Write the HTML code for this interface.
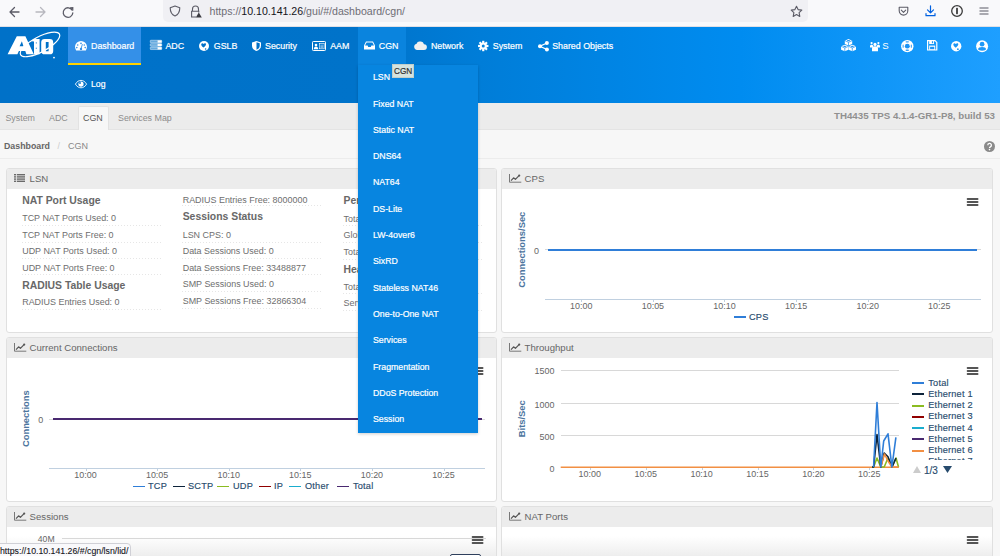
<!DOCTYPE html>
<html><head><meta charset="utf-8">
<style>
*{margin:0;padding:0;box-sizing:border-box}
html,body{width:1000px;height:556px;overflow:hidden;background:#f7f7f7;font-family:"Liberation Sans",sans-serif;position:relative}
.a{position:absolute}
.t{position:absolute;white-space:nowrap;line-height:1}
.pn{position:absolute;background:#fff;border:1px solid #e0e0e0;border-radius:3px;overflow:hidden}
.ph{position:absolute;left:0;top:0;right:0;height:20px;background:#ececec}
svg{overflow:visible}
</style></head><body>
<div class="a" style="left:0px;top:0px;width:1000px;height:26px;background:#f9f9fb"></div><div class="a" style="left:0px;top:26px;width:1000px;height:1px;background:#e0e0e6"></div><div class="a" style="left:163px;top:-6px;width:645px;height:28px;background:#f0f0f4;border-radius:5px"></div><svg class="a" style="left:8px;top:6px;" width="12" height="12" viewBox="0 0 12 12"><path d="M11 6H2M6.5 1.5L2 6l4.5 4.5" fill="none" stroke="#5b5b66" stroke-width="1.3" stroke-linecap="round" stroke-linejoin="round"/></svg><svg class="a" style="left:35px;top:6px;" width="12" height="12" viewBox="0 0 12 12"><path d="M1 6h9M5.5 1.5L10 6l-4.5 4.5" fill="none" stroke="#b8b8bf" stroke-width="1.3" stroke-linecap="round" stroke-linejoin="round"/></svg><svg class="a" style="left:62px;top:6px;" width="12" height="12" viewBox="0 0 12 12"><path d="M10.2 4.2A4.8 4.8 0 1 0 10.8 7" fill="none" stroke="#5b5b66" stroke-width="1.3" stroke-linecap="round"/><path d="M7.6 1.2L11.4 1v3.8z" fill="#5b5b66"/></svg><svg class="a" style="left:169px;top:5px;" width="12" height="12" viewBox="0 0 12 12"><path d="M6 1L1.2 2.8c0 4.4 1.8 7 4.8 8.2 3-1.2 4.8-3.8 4.8-8.2z" fill="none" stroke="#5b5b66" stroke-width="1.1" stroke-linejoin="round"/></svg><svg class="a" style="left:190px;top:5px;" width="12" height="13" viewBox="0 0 12 13"><path d="M2.5 6V4a3 3 0 0 1 6 0v2" fill="none" stroke="#5b5b66" stroke-width="1.1"/><path d="M6 12H1.6V6.2h7.2v1.3" fill="none" stroke="#5b5b66" stroke-width="1.1"/><path d="M8.8 7.5l3 5H5.8z" fill="#3a3a40"/></svg><div class="t" style="left:209.5px;top:6.2px;font-size:10.6px;color:#6e6d74">https://<span style="color:#15141a">10.10.141.26</span>/gui/#/dashboard/cgn/</div><svg class="a" style="left:790px;top:5px;" width="13" height="13" viewBox="0 0 13 13"><path d="M6.5 1.2l1.6 3.4 3.7.5-2.7 2.6.7 3.7-3.3-1.8-3.3 1.8.7-3.7L1.2 5.1l3.7-.5z" fill="none" stroke="#5b5b66" stroke-width="1.1" stroke-linejoin="round"/></svg><svg class="a" style="left:898px;top:6px;" width="11" height="11" viewBox="0 0 11 11"><path d="M1.2 1.2h8.6v3.6a4.3 4.3 0 0 1-8.6 0z" fill="none" stroke="#5b5b66" stroke-width="1.1" stroke-linejoin="round"/><path d="M3.3 4.2l2.2 2.1 2.2-2.1" fill="none" stroke="#5b5b66" stroke-width="1.1" stroke-linecap="round" stroke-linejoin="round"/></svg><svg class="a" style="left:925px;top:5px;" width="11" height="12" viewBox="0 0 11 12"><path d="M5.5 0.8v7M2.5 4.8l3 3 3-3" fill="none" stroke="#0061e0" stroke-width="1.2" stroke-linecap="round" stroke-linejoin="round"/><path d="M1 8.5v2.2h9V8.5" fill="none" stroke="#0061e0" stroke-width="1.2" stroke-linecap="round" stroke-linejoin="round"/></svg><svg class="a" style="left:951px;top:5px;" width="12" height="12" viewBox="0 0 12 12"><circle cx="6" cy="6" r="5.3" fill="none" stroke="#3b3b3b" stroke-width="1.3"/><rect x="5.1" y="2.8" width="1.8" height="6.4" rx=".6" fill="#3b3b3b"/></svg><svg class="a" style="left:979px;top:7px;" width="10" height="8" viewBox="0 0 10 8"><path d="M0.5 1h9M0.5 4h9M0.5 7h9" stroke="#5b5b66" stroke-width="1.1"/></svg><div class="a" style="left:0px;top:27px;width:1000px;height:76px;background:linear-gradient(90deg,#0071c8 0%,#0073ca 36%,#007dd8 48%,#008cf0 74%,#1e9fff 100%)"></div><div class="a" style="left:68px;top:27px;width:73px;height:36px;background:#3490e8"></div><div class="a" style="left:68px;top:63px;width:73px;height:2px;background:#ffd200"></div><div class="a" style="left:358px;top:27px;width:48px;height:38px;background:#0a84de"></div><svg class="a" style="left:0px;top:28px;" width="64" height="34" viewBox="0 0 64 34"><path d="M7.6 26.3L16.8 8.3h8.6l8.4 18h-7.4l-1.1-3.3h-6.4l-1.5 3.3z M19.6 18.3h3.8l-1.5-5z" fill="#fff" fill-rule="evenodd"/>
<path d="M31.8 13.2l1.4-2.3h6.4v15.4h-5.6V13.4z" fill="#fff"/>
<path d="M44.6 10.9h5.2a3.4 3.4 0 0 1 3.4 3.4v8.6a3.4 3.4 0 0 1-3.4 3.4h-5.2a3.4 3.4 0 0 1-3.4-3.4v-8.6a3.4 3.4 0 0 1 3.4-3.4z M45.8 14v9.2h2.8V14z" fill="#fff" fill-rule="evenodd"/>
<path d="M36.3 14.2v1.4M36.3 19.6v1.4M47.2 14.6v1M47.2 20v1" stroke="#0070c8" stroke-width=".7"/>
<ellipse cx="40" cy="16.4" rx="22" ry="7.6" transform="rotate(-28 40 16.4)" fill="none" stroke="#fff" stroke-width="1.2"/>
<path d="M21 20.5 L30 13" stroke="#0070c8" stroke-width="0"/>
<circle cx="54" cy="29.6" r=".9" fill="#fff"/></svg><svg class="a" style="left:74.7px;top:41.2px;" width="12" height="9.5" viewBox="0 0 12 9.5"><path d="M1.13 9.5A6 6 0 1 1 10.87 9.5z" fill="#fff"/><circle cx="6" cy="2.4" r=".8" fill="#3490e8"/><circle cx="2.7" cy="4" r=".8" fill="#3490e8"/><circle cx="9.3" cy="4" r=".8" fill="#3490e8"/><circle cx="1.8" cy="6.6" r=".8" fill="#3490e8"/><circle cx="10.2" cy="6.6" r=".8" fill="#3490e8"/><path d="M6 7.8L7.4 3.2" stroke="#3490e8" stroke-width=".9"/><circle cx="6" cy="7.9" r="1.2" fill="#3490e8"/></svg><svg class="a" style="left:149.5px;top:40.4px;" width="12" height="9.6" viewBox="0 0 12 9.6"><g fill="rgba(255,255,255,.4)" stroke="rgba(255,255,255,.9)" stroke-width=".5"><rect x=".25" y=".25" width="11.5" height="2.5" rx=".6"/><rect x=".25" y="3.65" width="11.5" height="2.5" rx=".6"/><rect x=".25" y="7.05" width="11.5" height="2.5" rx=".6"/></g><g fill="#fff"><rect x="7.6" y=".4" width="4" height="2.2"/><rect x="7.6" y="3.8" width="4" height="2.2"/><rect x="7.6" y="7.2" width="4" height="2.2"/></g></svg><svg class="a" style="left:199.4px;top:40.6px;" width="10" height="10" viewBox="0 0 10 10"><circle cx="5" cy="5" r="5" fill="#fff"/><path d="M2.3 2.9c.5-.9 1.7-.8 2.3.1.6-.9 1.8-1.1 2.3-.3.5.9-.5 2.3-2.3 3.9C2.8 5.2 1.9 3.8 2.3 2.9z" fill="#0070c8"/><circle cx="6.6" cy="8" r=".8" fill="#0070c8"/></svg><svg class="a" style="left:252.2px;top:40.6px;" width="9" height="10" viewBox="0 0 9 10"><path d="M4.5 0L0 1.4v3.4C0 7.6 2 9.2 4.5 10 7 9.2 9 7.6 9 4.8V1.4z" fill="#fff"/><path d="M4.5 1.2v7.6C6.5 8 7.7 6.8 7.7 4.8V2.2z" fill="#0070c8"/></svg><svg class="a" style="left:312.2px;top:40.8px;" width="14" height="10" viewBox="0 0 14 10"><rect x=".5" y=".5" width="13" height="9" rx=".8" fill="none" stroke="#fff" stroke-width="1"/><circle cx="4" cy="4" r="1.3" fill="#fff"/><path d="M1.8 8.2c0-1.6 1-2.6 2.2-2.6s2.2 1 2.2 2.6z" fill="#fff"/><rect x="7.6" y="2.6" width="4.6" height="5.2" fill="none" stroke="#fff" stroke-width=".6"/><path d="M8.4 4.2h3M8.4 5.4h3M8.4 6.6h3" stroke="#fff" stroke-width=".5"/></svg><svg class="a" style="left:364.4px;top:41.4px;" width="11" height="8.5" viewBox="0 0 11 8.5"><path d="M2 .4h7L11 4.6v3.9H0V4.6z" fill="#fff"/><path d="M2.6 1.5h5.8L10 4.6H7.4l-.6 1.3H4.2l-.6-1.3H1z" fill="#0b83dd"/></svg><svg class="a" style="left:413.8px;top:40.8px;" width="13" height="9" viewBox="0 0 13 9"><path d="M3.2 9A3.2 3.2 0 0 1 2.6 2.7 3 3 0 0 1 5.6 0.6a3.6 3.6 0 0 1 4.4 2.6A2.9 2.9 0 0 1 10 9z" fill="#f0f0f0"/></svg><svg class="a" style="left:478.2px;top:41.2px;" width="10.5" height="10" viewBox="0 0 10.5 10"><g transform="translate(5.25 5.0)" fill="#fff"><rect x="-1.1" y="-5.2" width="2.2" height="2.6" transform="rotate(0)"/><rect x="-1.1" y="-5.2" width="2.2" height="2.6" transform="rotate(45)"/><rect x="-1.1" y="-5.2" width="2.2" height="2.6" transform="rotate(90)"/><rect x="-1.1" y="-5.2" width="2.2" height="2.6" transform="rotate(135)"/><rect x="-1.1" y="-5.2" width="2.2" height="2.6" transform="rotate(180)"/><rect x="-1.1" y="-5.2" width="2.2" height="2.6" transform="rotate(225)"/><rect x="-1.1" y="-5.2" width="2.2" height="2.6" transform="rotate(270)"/><rect x="-1.1" y="-5.2" width="2.2" height="2.6" transform="rotate(315)"/><circle r="3.6"/></g><circle cx="5.25" cy="5" r="1.5" fill="#0884de"/></svg><svg class="a" style="left:537.5px;top:40.5px;" width="11" height="10.5" viewBox="0 0 11 10.5"><circle cx="8.9" cy="2" r="2" fill="#fff"/><circle cx="2" cy="5.25" r="2" fill="#fff"/><circle cx="8.9" cy="8.5" r="2" fill="#fff"/><path d="M8.9 2L2 5.25 8.9 8.5" fill="none" stroke="#fff" stroke-width="1.3"/></svg><div class="t" style="left:91.0px;top:42.1px;font-size:8.85px;color:#fff;font-weight:normal;-webkit-text-stroke:.2px #fff">Dashboard</div><div class="t" style="left:165.4px;top:42.1px;font-size:8.85px;color:#fff;font-weight:normal;-webkit-text-stroke:.2px #fff">ADC</div><div class="t" style="left:213.8px;top:42.1px;font-size:8.85px;color:#fff;font-weight:normal;-webkit-text-stroke:.2px #fff">GSLB</div><div class="t" style="left:265.0px;top:42.1px;font-size:8.85px;color:#fff;font-weight:normal;-webkit-text-stroke:.2px #fff">Security</div><div class="t" style="left:330.2px;top:42.1px;font-size:8.85px;color:#fff;font-weight:normal;-webkit-text-stroke:.2px #fff">AAM</div><div class="t" style="left:378.8px;top:42.1px;font-size:8.85px;color:#fff;font-weight:normal;-webkit-text-stroke:.2px #fff">CGN</div><div class="t" style="left:430.9px;top:42.1px;font-size:8.85px;color:#fff;font-weight:normal;-webkit-text-stroke:.2px #fff">Network</div><div class="t" style="left:492.8px;top:42.1px;font-size:8.85px;color:#fff;font-weight:normal;-webkit-text-stroke:.2px #fff">System</div><div class="t" style="left:552.2px;top:42.1px;font-size:8.85px;color:#fff;font-weight:normal;-webkit-text-stroke:.2px #fff">Shared Objects</div><svg class="a" style="left:74.8px;top:80px;" width="12" height="8.2" viewBox="0 0 12 8.2"><path d="M0.4 4.1C2 1.4 4 .4 6 .4s4 1 5.6 3.7C10 6.8 8 7.8 6 7.8S2 6.8.4 4.1z" fill="none" stroke="#fff" stroke-width=".9"/><circle cx="6" cy="4.1" r="2.6" fill="#fff"/><circle cx="5" cy="3" r=".9" fill="#0070c8"/></svg><div class="t" style="left:91.0px;top:80.2px;font-size:8.7px;color:#fff;font-weight:normal;-webkit-text-stroke:.2px #fff">Log</div><svg class="a" style="left:840.8px;top:39.4px;" width="15.1" height="12.3" viewBox="0 0 15.1 12.3"><path d="M7.5 0L11.2 1.65V4.949999999999999L7.5 6.6L3.8 4.949999999999999V1.65z" fill="#fff"/><path d="M3.8 1.65L7.5 3.3L11.2 1.65M7.5 3.3V6.6" fill="none" stroke="#1b8ff0" stroke-width=".7"/><ellipse cx="7.5" cy="1.65" rx="1.6280000000000001" ry="0.66" fill="#1b8ff0"/><path d="M3.8 5.7L7.5 7.35V10.649999999999999L3.8 12.3L0.09999999999999964 10.649999999999999V7.35z" fill="#fff"/><path d="M0.09999999999999964 7.35L3.8 9.0L7.5 7.35M3.8 9.0V12.3" fill="none" stroke="#1b8ff0" stroke-width=".7"/><ellipse cx="3.8" cy="7.35" rx="1.6280000000000001" ry="0.66" fill="#1b8ff0"/><path d="M11.3 5.7L15.0 7.35V10.649999999999999L11.3 12.3L7.6000000000000005 10.649999999999999V7.35z" fill="#fff"/><path d="M7.6000000000000005 7.35L11.3 9.0L15.0 7.35M11.3 9.0V12.3" fill="none" stroke="#1b8ff0" stroke-width=".7"/><ellipse cx="11.3" cy="7.35" rx="1.6280000000000001" ry="0.66" fill="#1b8ff0"/></svg><svg class="a" style="left:869.9px;top:41.6px;" width="10" height="9.2" viewBox="0 0 10 9.2"><g fill="#fff"><circle cx="5" cy="2.4" r="1.6"/><circle cx="1.6" cy="1.1" r="1.1"/><circle cx="8.4" cy="1.1" r="1.1"/><path d="M2 9.2V6.2c0-1.2 1.2-2 3-2s3 .8 3 2v3z"/><path d="M0 5.6V4.2c0-.8.6-1.4 1.6-1.4s1.6.6 1.6 1.4v1.4z"/><path d="M6.8 5.6V4.2c0-.8.6-1.4 1.6-1.4s1.6.6 1.6 1.4v1.4z"/></g></svg><div class="t" style="left:882.2px;top:41.4px;font-size:9.6px;color:#fff;font-weight:normal;">S</div><svg class="a" style="left:901.3px;top:39.6px;" width="12.6" height="12.4" viewBox="0 0 12.6 12.4"><circle cx="6.3" cy="6.15" r="6.2" fill="#fff"/><circle cx="6.3" cy="6.15" r="2.45" fill="#1a92f4"/><g fill="#1a92f4" opacity=".85"><rect x="4.6" y="1.3" width="3.3" height="1.1" rx=".55"/><rect x="4.6" y="9.5" width="3.3" height="1.4" rx=".6"/><rect x="1.6" y="4.4" width="1.1" height="3.4" rx=".55"/><rect x="9.8" y="4.4" width="1.1" height="3.4" rx=".55"/></g></svg><svg class="a" style="left:927px;top:40.3px;" width="10.4" height="10.6" viewBox="0 0 10.4 10.6"><path d="M.6.6h7.4l1.8 1.8v7.6H.6z" fill="none" stroke="#fff" stroke-width="1.2"/><rect x="2.2" y=".6" width="4.8" height="3.4" fill="#fff"/><rect x="4.9" y="1.2" width="1.2" height="2" fill="#1a94f5"/><rect x="2.2" y="5.6" width="6" height="4.4" fill="#fff"/><rect x="3.1" y="6.8" width="4.2" height="2.4" fill="#1a94f5"/></svg><svg class="a" style="left:950.7px;top:40.6px;" width="10.4" height="10.4" viewBox="0 0 10.4 10.4"><circle cx="5.2" cy="5.2" r="5.2" fill="#fff"/><path d="M2.4 2.9c.5-.9 1.7-.8 2.4.1.6-.9 1.9-1.1 2.4-.3.5.9-.5 2.4-2.4 4C2.9 5.3 2 3.9 2.4 2.9z" fill="#1b96f6"/><circle cx="6.9" cy="8.2" r=".9" fill="#1b96f6"/></svg><svg class="a" style="left:975.9px;top:39.6px;" width="12.2" height="12.4" viewBox="0 0 12.2 12.4"><circle cx="6.1" cy="6.2" r="6" fill="#fff"/><circle cx="6.1" cy="4.2" r="2.35" fill="#1e98f8"/><path d="M2.1 9.1c0-1.3 1.8-2.1 4-2.1s3.9.8 3.9 2.1c0 1.1-1.6 1.7-3.9 1.7S2.1 10.2 2.1 9.1z" fill="#1e98f8"/></svg><div class="a" style="left:0px;top:103px;width:1000px;height:26px;background:#ececec"></div><div class="a" style="left:0px;top:129px;width:1000px;height:1px;background:#e4e4e4"></div><div class="a" style="left:78px;top:106px;width:31px;height:24px;background:#f7f7f7;border:1px solid #e2e2e2;border-bottom:none;border-radius:2px 2px 0 0"></div><div class="t" style="left:5.4px;top:113.6px;font-size:8.9px;color:#8c8c8c;font-weight:normal;">System</div><div class="t" style="left:49.0px;top:113.6px;font-size:8.9px;color:#8c8c8c;font-weight:normal;">ADC</div><div class="t" style="left:83.0px;top:113.6px;font-size:8.9px;color:#555;font-weight:normal;">CGN</div><div class="t" style="left:118.0px;top:113.6px;font-size:8.9px;color:#8c8c8c;font-weight:normal;">Services Map</div><div class="t" style="left:834.0px;top:111.1px;font-size:9.72px;color:#909090;font-weight:bold;">TH4435 TPS 4.1.4-GR1-P8, build 53</div><div class="a" style="left:0px;top:130px;width:1000px;height:28px;background:#f7f7f7"></div><div class="a" style="left:0px;top:158px;width:1000px;height:1px;background:#ececec"></div><div class="t" style="left:4.0px;top:141.7px;font-size:8.8px;color:#666;font-weight:bold;">Dashboard</div><div class="t" style="left:57.5px;top:141.7px;font-size:8.8px;color:#ccc;font-weight:normal;">/</div><div class="t" style="left:68.0px;top:141.5px;font-size:9.0px;color:#888;font-weight:normal;">CGN</div><svg class="a" style="left:983.5px;top:140.5px;" width="11" height="11" viewBox="0 0 11 11"><circle cx="5.5" cy="5.5" r="5.5" fill="#8a8a8a"/><path d="M3.8 4.2a1.8 1.8 0 1 1 2.6 1.6c-.6.3-.9.6-.9 1.3" fill="none" stroke="#fff" stroke-width="1.3"/><circle cx="5.5" cy="8.6" r=".8" fill="#fff"/></svg><div class="pn" style="left:6px;top:168px;width:491px;height:165px"><div class="ph"></div></div><svg class="a" style="left:14px;top:174px;" width="11" height="8" viewBox="0 0 11 8"><g fill="#6a6a6a"><rect x="0" y="0" width="2" height="1.4"/><rect x="2.8" y="0" width="8.2" height="1.4"/><rect x="0" y="2.2" width="2" height="1.4"/><rect x="2.8" y="2.2" width="8.2" height="1.4"/><rect x="0" y="4.4" width="2" height="1.4"/><rect x="2.8" y="4.4" width="8.2" height="1.4"/><rect x="0" y="6.6" width="2" height="1.4"/><rect x="2.8" y="6.6" width="8.2" height="1.4"/></g></svg><div class="t" style="left:29.6px;top:173.8px;font-size:9.6px;color:#666;font-weight:normal;">LSN</div><div class="pn" style="left:501px;top:168px;width:492px;height:165px"><div class="ph"></div></div><svg class="a" style="left:509px;top:174px;" width="12.3" height="8.7" viewBox="0 0 12.3 8.7"><path d="M.5 0v8.2h11.8" fill="none" stroke="#777" stroke-width="1"/><path d="M2 6.6l2.6-2.8 1.8 1.6 3.4-3.6" fill="none" stroke="#555" stroke-width="1.2" stroke-linejoin="round"/><circle cx="10.2" cy="1.6" r="1.1" fill="#555"/></svg><div class="t" style="left:524.6px;top:173.8px;font-size:9.6px;color:#666;font-weight:normal;">CPS</div><div class="pn" style="left:6px;top:337px;width:491px;height:165px"><div class="ph"></div></div><svg class="a" style="left:14px;top:343px;" width="12.3" height="8.7" viewBox="0 0 12.3 8.7"><path d="M.5 0v8.2h11.8" fill="none" stroke="#777" stroke-width="1"/><path d="M2 6.6l2.6-2.8 1.8 1.6 3.4-3.6" fill="none" stroke="#555" stroke-width="1.2" stroke-linejoin="round"/><circle cx="10.2" cy="1.6" r="1.1" fill="#555"/></svg><div class="t" style="left:29.6px;top:342.8px;font-size:9.6px;color:#666;font-weight:normal;">Current Connections</div><div class="pn" style="left:501px;top:337px;width:492px;height:165px"><div class="ph"></div></div><svg class="a" style="left:509px;top:343px;" width="12.3" height="8.7" viewBox="0 0 12.3 8.7"><path d="M.5 0v8.2h11.8" fill="none" stroke="#777" stroke-width="1"/><path d="M2 6.6l2.6-2.8 1.8 1.6 3.4-3.6" fill="none" stroke="#555" stroke-width="1.2" stroke-linejoin="round"/><circle cx="10.2" cy="1.6" r="1.1" fill="#555"/></svg><div class="t" style="left:524.6px;top:342.8px;font-size:9.6px;color:#666;font-weight:normal;">Throughput</div><div class="pn" style="left:6px;top:506px;width:491px;height:70px"><div class="ph"></div></div><svg class="a" style="left:14px;top:512px;" width="12.3" height="8.7" viewBox="0 0 12.3 8.7"><path d="M.5 0v8.2h11.8" fill="none" stroke="#777" stroke-width="1"/><path d="M2 6.6l2.6-2.8 1.8 1.6 3.4-3.6" fill="none" stroke="#555" stroke-width="1.2" stroke-linejoin="round"/><circle cx="10.2" cy="1.6" r="1.1" fill="#555"/></svg><div class="t" style="left:29.6px;top:511.8px;font-size:9.6px;color:#666;font-weight:normal;">Sessions</div><div class="pn" style="left:501px;top:506px;width:492px;height:70px"><div class="ph"></div></div><svg class="a" style="left:509px;top:512px;" width="12.3" height="8.7" viewBox="0 0 12.3 8.7"><path d="M.5 0v8.2h11.8" fill="none" stroke="#777" stroke-width="1"/><path d="M2 6.6l2.6-2.8 1.8 1.6 3.4-3.6" fill="none" stroke="#555" stroke-width="1.2" stroke-linejoin="round"/><circle cx="10.2" cy="1.6" r="1.1" fill="#555"/></svg><div class="t" style="left:524.6px;top:511.8px;font-size:9.6px;color:#666;font-weight:normal;">NAT Ports</div><div class="t" style="left:22.2px;top:195.7px;font-size:10.4px;color:#686868;font-weight:bold;">NAT Port Usage</div><div class="t" style="left:22.2px;top:214.3px;font-size:8.95px;color:#6e6e6e;font-weight:normal;">TCP NAT Ports Used: 0</div><div class="a" style="left:21.5px;top:225px;width:139px;height:1px;background-image:linear-gradient(90deg,#e6e6e6 50%,transparent 50%);background-size:3px 1px"></div><div class="t" style="left:22.2px;top:230.9px;font-size:8.95px;color:#6e6e6e;font-weight:normal;">TCP NAT Ports Free: 0</div><div class="a" style="left:21.5px;top:242px;width:139px;height:1px;background-image:linear-gradient(90deg,#e6e6e6 50%,transparent 50%);background-size:3px 1px"></div><div class="t" style="left:22.2px;top:247.3px;font-size:8.95px;color:#6e6e6e;font-weight:normal;">UDP NAT Ports Used: 0</div><div class="a" style="left:21.5px;top:258px;width:139px;height:1px;background-image:linear-gradient(90deg,#e6e6e6 50%,transparent 50%);background-size:3px 1px"></div><div class="t" style="left:22.2px;top:263.7px;font-size:8.95px;color:#6e6e6e;font-weight:normal;">UDP NAT Ports Free: 0</div><div class="a" style="left:21.5px;top:274px;width:139px;height:1px;background-image:linear-gradient(90deg,#e6e6e6 50%,transparent 50%);background-size:3px 1px"></div><div class="t" style="left:22.2px;top:280.9px;font-size:10.4px;color:#686868;font-weight:bold;">RADIUS Table Usage</div><div class="t" style="left:22.2px;top:298.3px;font-size:8.95px;color:#6e6e6e;font-weight:normal;">RADIUS Entries Used: 0</div><div class="a" style="left:21.5px;top:309px;width:139px;height:1px;background-image:linear-gradient(90deg,#e6e6e6 50%,transparent 50%);background-size:3px 1px"></div><div class="t" style="left:182.7px;top:195.6px;font-size:8.95px;color:#6e6e6e;font-weight:normal;">RADIUS Entries Free: 8000000</div><div class="a" style="left:182px;top:205px;width:139px;height:1px;background-image:linear-gradient(90deg,#e6e6e6 50%,transparent 50%);background-size:3px 1px"></div><div class="t" style="left:182.7px;top:212.1px;font-size:10.4px;color:#686868;font-weight:bold;">Sessions Status</div><div class="t" style="left:182.7px;top:230.8px;font-size:8.95px;color:#6e6e6e;font-weight:normal;">LSN CPS: 0</div><div class="a" style="left:182px;top:242px;width:139px;height:1px;background-image:linear-gradient(90deg,#e6e6e6 50%,transparent 50%);background-size:3px 1px"></div><div class="t" style="left:182.7px;top:247.0px;font-size:8.95px;color:#6e6e6e;font-weight:normal;">Data Sessions Used: 0</div><div class="a" style="left:182px;top:258px;width:139px;height:1px;background-image:linear-gradient(90deg,#e6e6e6 50%,transparent 50%);background-size:3px 1px"></div><div class="t" style="left:182.7px;top:263.7px;font-size:8.95px;color:#6e6e6e;font-weight:normal;">Data Sessions Free: 33488877</div><div class="a" style="left:182px;top:274px;width:139px;height:1px;background-image:linear-gradient(90deg,#e6e6e6 50%,transparent 50%);background-size:3px 1px"></div><div class="t" style="left:182.7px;top:280.1px;font-size:8.95px;color:#6e6e6e;font-weight:normal;">SMP Sessions Used: 0</div><div class="a" style="left:182px;top:291px;width:139px;height:1px;background-image:linear-gradient(90deg,#e6e6e6 50%,transparent 50%);background-size:3px 1px"></div><div class="t" style="left:182.7px;top:297.0px;font-size:8.95px;color:#6e6e6e;font-weight:normal;">SMP Sessions Free: 32866304</div><div class="a" style="left:182px;top:308px;width:139px;height:1px;background-image:linear-gradient(90deg,#e6e6e6 50%,transparent 50%);background-size:3px 1px"></div><div class="t" style="left:343.5px;top:195.9px;font-size:10.4px;color:#686868;font-weight:bold;">Per-user Quota</div><div class="t" style="left:343.5px;top:214.6px;font-size:8.95px;color:#6e6e6e;font-weight:normal;">Total Users: 0</div><div class="a" style="left:343px;top:225px;width:139px;height:1px;background-image:linear-gradient(90deg,#e6e6e6 50%,transparent 50%);background-size:3px 1px"></div><div class="t" style="left:343.5px;top:231.3px;font-size:8.95px;color:#6e6e6e;font-weight:normal;">Global Exceeded: 0</div><div class="a" style="left:343px;top:242px;width:139px;height:1px;background-image:linear-gradient(90deg,#e6e6e6 50%,transparent 50%);background-size:3px 1px"></div><div class="t" style="left:343.5px;top:247.9px;font-size:8.95px;color:#6e6e6e;font-weight:normal;">Total Quota: 0</div><div class="a" style="left:343px;top:259px;width:139px;height:1px;background-image:linear-gradient(90deg,#e6e6e6 50%,transparent 50%);background-size:3px 1px"></div><div class="t" style="left:343.5px;top:264.5px;font-size:10.4px;color:#686868;font-weight:bold;">Health</div><div class="t" style="left:343.5px;top:282.7px;font-size:8.95px;color:#6e6e6e;font-weight:normal;">Total Alive: 0</div><div class="a" style="left:343px;top:293px;width:139px;height:1px;background-image:linear-gradient(90deg,#e6e6e6 50%,transparent 50%);background-size:3px 1px"></div><div class="t" style="left:343.5px;top:298.8px;font-size:8.95px;color:#6e6e6e;font-weight:normal;">Servers Down: 0</div><div class="a" style="left:343px;top:310px;width:139px;height:1px;background-image:linear-gradient(90deg,#e6e6e6 50%,transparent 50%);background-size:3px 1px"></div><div class="t" style="left:461.79999999999995px;width:120px;text-align:center;top:244.6px;font-size:9.4px;color:#4d759e;font-weight:bold;transform:rotate(-90deg);line-height:1">Connections/Sec</div><div class="t" style="left:533.9px;top:246.6px;font-size:8.95px;color:#666;font-weight:normal;">0</div><div class="a" style="left:544.7px;top:249px;width:436px;height:1px;background:#d8d8d8"></div><div class="a" style="left:548.3px;top:248.8px;width:428.5px;height:2px;background:#2f7ed8"></div><div class="a" style="left:544.7px;top:299px;width:436.0px;height:1px;background:#c0d0e0"></div><div class="a" style="left:581px;top:300px;width:1px;height:2px;background:#c0d0e0"></div><div class="t" style="left:551.3px;width:60px;text-align:center;top:301.6px;font-size:8.95px;color:#666">10:00</div><div class="a" style="left:653px;top:300px;width:1px;height:2px;background:#c0d0e0"></div><div class="t" style="left:622.9px;width:60px;text-align:center;top:301.6px;font-size:8.95px;color:#666">10:05</div><div class="a" style="left:724px;top:300px;width:1px;height:2px;background:#c0d0e0"></div><div class="t" style="left:694.5px;width:60px;text-align:center;top:301.6px;font-size:8.95px;color:#666">10:10</div><div class="a" style="left:796px;top:300px;width:1px;height:2px;background:#c0d0e0"></div><div class="t" style="left:766.1px;width:60px;text-align:center;top:301.6px;font-size:8.95px;color:#666">10:15</div><div class="a" style="left:868px;top:300px;width:1px;height:2px;background:#c0d0e0"></div><div class="t" style="left:837.7px;width:60px;text-align:center;top:301.6px;font-size:8.95px;color:#666">10:20</div><div class="a" style="left:939px;top:300px;width:1px;height:2px;background:#c0d0e0"></div><div class="t" style="left:909.3px;width:60px;text-align:center;top:301.6px;font-size:8.95px;color:#666">10:25</div><svg class="a" style="left:967px;top:197.5px;" width="11" height="8" viewBox="0 0 11 8"><path d="M0.6 1h10M0.6 4h10M0.6 7h10" stroke="#555" stroke-width="1.8" stroke-linecap="round"/></svg><div class="a" style="left:733.5px;top:316.2px;width:12px;height:1.6px;background:#2f7ed8"></div><div class="t" style="left:749.0px;top:312.6px;font-size:9.2px;color:#274b6d;font-weight:normal;letter-spacing:.2px;-webkit-text-stroke:.15px #274b6d">CPS</div><div class="t" style="left:-34px;width:120px;text-align:center;top:413.8px;font-size:9.4px;color:#4d759e;font-weight:bold;transform:rotate(-90deg);line-height:1">Connections</div><div class="t" style="left:38.3px;top:416.2px;font-size:8.95px;color:#666;font-weight:normal;">0</div><div class="a" style="left:49.4px;top:418.5px;width:436px;height:1px;background:#d8d8d8"></div><div class="a" style="left:53px;top:417.8px;width:429px;height:2px;background:#492970"></div><div class="a" style="left:49.4px;top:468px;width:436.0px;height:1px;background:#c0d0e0"></div><div class="a" style="left:86px;top:469px;width:1px;height:2px;background:#c0d0e0"></div><div class="t" style="left:55.5px;width:60px;text-align:center;top:470.6px;font-size:8.95px;color:#666">10:00</div><div class="a" style="left:157px;top:469px;width:1px;height:2px;background:#c0d0e0"></div><div class="t" style="left:127.1px;width:60px;text-align:center;top:470.6px;font-size:8.95px;color:#666">10:05</div><div class="a" style="left:229px;top:469px;width:1px;height:2px;background:#c0d0e0"></div><div class="t" style="left:198.7px;width:60px;text-align:center;top:470.6px;font-size:8.95px;color:#666">10:10</div><div class="a" style="left:300px;top:469px;width:1px;height:2px;background:#c0d0e0"></div><div class="t" style="left:270.3px;width:60px;text-align:center;top:470.6px;font-size:8.95px;color:#666">10:15</div><div class="a" style="left:372px;top:469px;width:1px;height:2px;background:#c0d0e0"></div><div class="t" style="left:341.9px;width:60px;text-align:center;top:470.6px;font-size:8.95px;color:#666">10:20</div><div class="a" style="left:444px;top:469px;width:1px;height:2px;background:#c0d0e0"></div><div class="t" style="left:413.5px;width:60px;text-align:center;top:470.6px;font-size:8.95px;color:#666">10:25</div><svg class="a" style="left:472px;top:366.5px;" width="11" height="8" viewBox="0 0 11 8"><path d="M0.6 1h10M0.6 4h10M0.6 7h10" stroke="#555" stroke-width="1.8" stroke-linecap="round"/></svg><div class="a" style="left:132.6px;top:485.8px;width:12px;height:1.6px;background:#2f7ed8"></div><div class="t" style="left:148.0px;top:482.2px;font-size:9.2px;color:#274b6d;font-weight:normal;letter-spacing:.2px;-webkit-text-stroke:.15px #274b6d">TCP</div><div class="a" style="left:172.7px;top:485.8px;width:12px;height:1.6px;background:#0d233a"></div><div class="t" style="left:188.0px;top:482.2px;font-size:9.2px;color:#274b6d;font-weight:normal;letter-spacing:.2px;-webkit-text-stroke:.15px #274b6d">SCTP</div><div class="a" style="left:217px;top:485.8px;width:12px;height:1.6px;background:#8bbc21"></div><div class="t" style="left:233.0px;top:482.2px;font-size:9.2px;color:#274b6d;font-weight:normal;letter-spacing:.2px;-webkit-text-stroke:.15px #274b6d">UDP</div><div class="a" style="left:259px;top:485.8px;width:12px;height:1.6px;background:#910000"></div><div class="t" style="left:274.0px;top:482.2px;font-size:9.2px;color:#274b6d;font-weight:normal;letter-spacing:.2px;-webkit-text-stroke:.15px #274b6d">IP</div><div class="a" style="left:289px;top:485.8px;width:12px;height:1.6px;background:#1aadce"></div><div class="t" style="left:305.0px;top:482.2px;font-size:9.2px;color:#274b6d;font-weight:normal;letter-spacing:.2px;-webkit-text-stroke:.15px #274b6d">Other</div><div class="a" style="left:337px;top:485.8px;width:12px;height:1.6px;background:#492970"></div><div class="t" style="left:353.0px;top:482.2px;font-size:9.2px;color:#274b6d;font-weight:normal;letter-spacing:.2px;-webkit-text-stroke:.15px #274b6d">Total</div><div class="t" style="left:461.5px;width:120px;text-align:center;top:413.8px;font-size:9.4px;color:#4d759e;font-weight:bold;transform:rotate(-90deg);line-height:1">Bits/Sec</div><div class="t" style="left:494px;width:60.5px;text-align:right;top:366.9px;font-size:8.95px;color:#666">1500</div><div class="a" style="left:560.7px;top:370px;width:338px;height:1px;background:#d8d8d8"></div><div class="t" style="left:494px;width:60.5px;text-align:right;top:400.6px;font-size:8.95px;color:#666">1000</div><div class="a" style="left:560.7px;top:403px;width:338px;height:1px;background:#d8d8d8"></div><div class="t" style="left:494px;width:60.5px;text-align:right;top:432.6px;font-size:8.95px;color:#666">500</div><div class="a" style="left:560.7px;top:435px;width:338px;height:1px;background:#d8d8d8"></div><div class="t" style="left:494px;width:60.5px;text-align:right;top:464.6px;font-size:8.95px;color:#666">0</div><div class="a" style="left:560.7px;top:467px;width:338.0999999999999px;height:1px;background:#c0d0e0"></div><div class="a" style="left:590px;top:468px;width:1px;height:2px;background:#c0d0e0"></div><div class="t" style="left:559.8px;width:60px;text-align:center;top:470.4px;font-size:8.95px;color:#666">10:00</div><div class="a" style="left:646px;top:468px;width:1px;height:2px;background:#c0d0e0"></div><div class="t" style="left:615.7px;width:60px;text-align:center;top:470.4px;font-size:8.95px;color:#666">10:05</div><div class="a" style="left:702px;top:468px;width:1px;height:2px;background:#c0d0e0"></div><div class="t" style="left:671.6px;width:60px;text-align:center;top:470.4px;font-size:8.95px;color:#666">10:10</div><div class="a" style="left:758px;top:468px;width:1px;height:2px;background:#c0d0e0"></div><div class="t" style="left:727.5px;width:60px;text-align:center;top:470.4px;font-size:8.95px;color:#666">10:15</div><div class="a" style="left:813px;top:468px;width:1px;height:2px;background:#c0d0e0"></div><div class="t" style="left:783.4px;width:60px;text-align:center;top:470.4px;font-size:8.95px;color:#666">10:20</div><div class="a" style="left:869px;top:468px;width:1px;height:2px;background:#c0d0e0"></div><div class="t" style="left:839.3px;width:60px;text-align:center;top:470.4px;font-size:8.95px;color:#666">10:25</div><svg class="a" style="left:967px;top:367px;" width="11" height="8" viewBox="0 0 11 8"><path d="M0.6 1h10M0.6 4h10M0.6 7h10" stroke="#555" stroke-width="1.8" stroke-linecap="round"/></svg><svg class="a" style="left:0;top:0" width="1000" height="556"><polyline points="560.7,467.3 898.8,467.3" fill="none" stroke="#f28f43" stroke-width="1.4" stroke-linejoin="round"/><polyline points="872,467 873.6,467 877,458 880.8,467 884.2,467 888,458 892,467 896,458 898.5,467" fill="none" stroke="#8bbc21" stroke-width="1.6" stroke-linejoin="round"/><polyline points="872,467 873.6,467 877,434.5 880.8,467 884.2,453 888,456.8 892,467 896,458.2" fill="none" stroke="#0d233a" stroke-width="1.6" stroke-linejoin="round"/><polyline points="880.8,467 884.5,454 888,461 892,467 898.5,467" fill="none" stroke="#f28f43" stroke-width="1.6" stroke-linejoin="round"/><polyline points="873.6,467 877,402.5 880.8,467 883.7,441 888,433.8 891.9,467 895.9,437.4" fill="none" stroke="#2f7ed8" stroke-width="1.6" stroke-linejoin="round"/></svg><div class="a" style="left:905px;top:376px;width:80px;height:84px;overflow:hidden"><div class="a" style="left:7.4px;top:6.0px;width:12px;height:2px;background:#2f7ed8"></div><div class="t" style="left:23.3px;top:2.6px;font-size:9.2px;color:#274b6d;letter-spacing:.2px;-webkit-text-stroke:.15px #274b6d">Total</div><div class="a" style="left:7.4px;top:17.2px;width:12px;height:2px;background:#0d233a"></div><div class="t" style="left:23.3px;top:13.8px;font-size:9.2px;color:#274b6d;letter-spacing:.2px;-webkit-text-stroke:.15px #274b6d">Ethernet 1</div><div class="a" style="left:7.4px;top:28.5px;width:12px;height:2px;background:#8bbc21"></div><div class="t" style="left:23.3px;top:25.1px;font-size:9.2px;color:#274b6d;letter-spacing:.2px;-webkit-text-stroke:.15px #274b6d">Ethernet 2</div><div class="a" style="left:7.4px;top:39.8px;width:12px;height:2px;background:#910000"></div><div class="t" style="left:23.3px;top:36.3px;font-size:9.2px;color:#274b6d;letter-spacing:.2px;-webkit-text-stroke:.15px #274b6d">Ethernet 3</div><div class="a" style="left:7.4px;top:51.0px;width:12px;height:2px;background:#1aadce"></div><div class="t" style="left:23.3px;top:47.6px;font-size:9.2px;color:#274b6d;letter-spacing:.2px;-webkit-text-stroke:.15px #274b6d">Ethernet 4</div><div class="a" style="left:7.4px;top:62.2px;width:12px;height:2px;background:#492970"></div><div class="t" style="left:23.3px;top:58.8px;font-size:9.2px;color:#274b6d;letter-spacing:.2px;-webkit-text-stroke:.15px #274b6d">Ethernet 5</div><div class="a" style="left:7.4px;top:73.5px;width:12px;height:2px;background:#f28f43"></div><div class="t" style="left:23.3px;top:70.1px;font-size:9.2px;color:#274b6d;letter-spacing:.2px;-webkit-text-stroke:.15px #274b6d">Ethernet 6</div><div class="a" style="left:7.4px;top:84.8px;width:12px;height:2px;background:#77a1e5"></div><div class="t" style="left:23.3px;top:81.3px;font-size:9.2px;color:#274b6d;letter-spacing:.2px;-webkit-text-stroke:.15px #274b6d">Ethernet 7</div></div><svg class="a" style="left:913px;top:466px;" width="8" height="7" viewBox="0 0 8 7"><path d="M0 7L4 0l4 7z" fill="#ccc"/></svg><div class="t" style="left:924.0px;top:465.5px;font-size:10px;color:#274b6d;font-weight:normal;-webkit-text-stroke:.15px #274b6d">1/3</div><svg class="a" style="left:943px;top:466px;" width="9" height="7" viewBox="0 0 9 7"><path d="M0 0h9L4.5 7z" fill="#274b6d"/></svg><div class="a" style="left:7px;top:536px;width:489px;height:21px;background:linear-gradient(#fff,#ededed)"></div><div class="a" style="left:502px;top:536px;width:490px;height:21px;background:linear-gradient(#fff,#ededed)"></div><div class="t" style="left:37.8px;top:535.3px;font-size:8.64px;color:#666;font-weight:normal;">40M</div><div class="a" style="left:61.6px;top:538px;width:424px;height:1px;background:#d8d8d8"></div><svg class="a" style="left:472px;top:535.5px;" width="11" height="8" viewBox="0 0 11 8"><path d="M0.6 1h10M0.6 4h10M0.6 7h10" stroke="#555" stroke-width="1.8" stroke-linecap="round"/></svg><div class="a" style="left:450px;top:553.6px;width:31px;height:6px;background:#fff;border:1.5px solid #2e3f5c;border-radius:2px"></div><svg class="a" style="left:967px;top:535.5px;" width="11" height="8" viewBox="0 0 11 8"><path d="M0.6 1h10M0.6 4h10M0.6 7h10" stroke="#555" stroke-width="1.8" stroke-linecap="round"/></svg><div class="a" style="left:358px;top:65px;width:120px;height:368px;background:#0785e0;box-shadow:0 1px 3px rgba(0,0,0,.2)"></div><div class="t" style="left:373.0px;top:73.2px;font-size:8.75px;color:#fff;font-weight:normal;-webkit-text-stroke:.2px #fff">LSN</div><div class="t" style="left:373.0px;top:99.5px;font-size:8.75px;color:#fff;font-weight:normal;-webkit-text-stroke:.2px #fff">Fixed NAT</div><div class="t" style="left:373.0px;top:125.8px;font-size:8.75px;color:#fff;font-weight:normal;-webkit-text-stroke:.2px #fff">Static NAT</div><div class="t" style="left:373.0px;top:152.1px;font-size:8.75px;color:#fff;font-weight:normal;-webkit-text-stroke:.2px #fff">DNS64</div><div class="t" style="left:373.0px;top:178.4px;font-size:8.75px;color:#fff;font-weight:normal;-webkit-text-stroke:.2px #fff">NAT64</div><div class="t" style="left:373.0px;top:204.7px;font-size:8.75px;color:#fff;font-weight:normal;-webkit-text-stroke:.2px #fff">DS-Lite</div><div class="t" style="left:373.0px;top:231.0px;font-size:8.75px;color:#fff;font-weight:normal;-webkit-text-stroke:.2px #fff">LW-4over6</div><div class="t" style="left:373.0px;top:257.3px;font-size:8.75px;color:#fff;font-weight:normal;-webkit-text-stroke:.2px #fff">SixRD</div><div class="t" style="left:373.0px;top:283.6px;font-size:8.75px;color:#fff;font-weight:normal;-webkit-text-stroke:.2px #fff">Stateless NAT46</div><div class="t" style="left:373.0px;top:309.9px;font-size:8.75px;color:#fff;font-weight:normal;-webkit-text-stroke:.2px #fff">One-to-One NAT</div><div class="t" style="left:373.0px;top:336.2px;font-size:8.75px;color:#fff;font-weight:normal;-webkit-text-stroke:.2px #fff">Services</div><div class="t" style="left:373.0px;top:362.5px;font-size:8.75px;color:#fff;font-weight:normal;-webkit-text-stroke:.2px #fff">Fragmentation</div><div class="t" style="left:373.0px;top:388.8px;font-size:8.75px;color:#fff;font-weight:normal;-webkit-text-stroke:.2px #fff">DDoS Protection</div><div class="t" style="left:373.0px;top:415.1px;font-size:8.75px;color:#fff;font-weight:normal;-webkit-text-stroke:.2px #fff">Session</div><div class="a" style="left:391.5px;top:64.3px;width:22.5px;height:13.7px;background:#d5e3df;border:1px solid #c2cfcb"></div><div class="t" style="left:394.0px;top:67.6px;font-size:8.2px;color:#2a2a2a;font-weight:normal;-webkit-text-stroke:.15px #2a2a2a">CGN</div><div class="a" style="left:-2px;top:543px;width:133px;height:16px;background:#f9f9fb;border:1px solid #d0d0d6;border-radius:0 4px 0 0"></div><div class="t" style="left:0.0px;top:546.8px;font-size:8.75px;color:#15141a;font-weight:normal;-webkit-text-stroke:.1px #15141a">https://10.10.141.26/#/cgn/lsn/lid/</div>
</body></html>
